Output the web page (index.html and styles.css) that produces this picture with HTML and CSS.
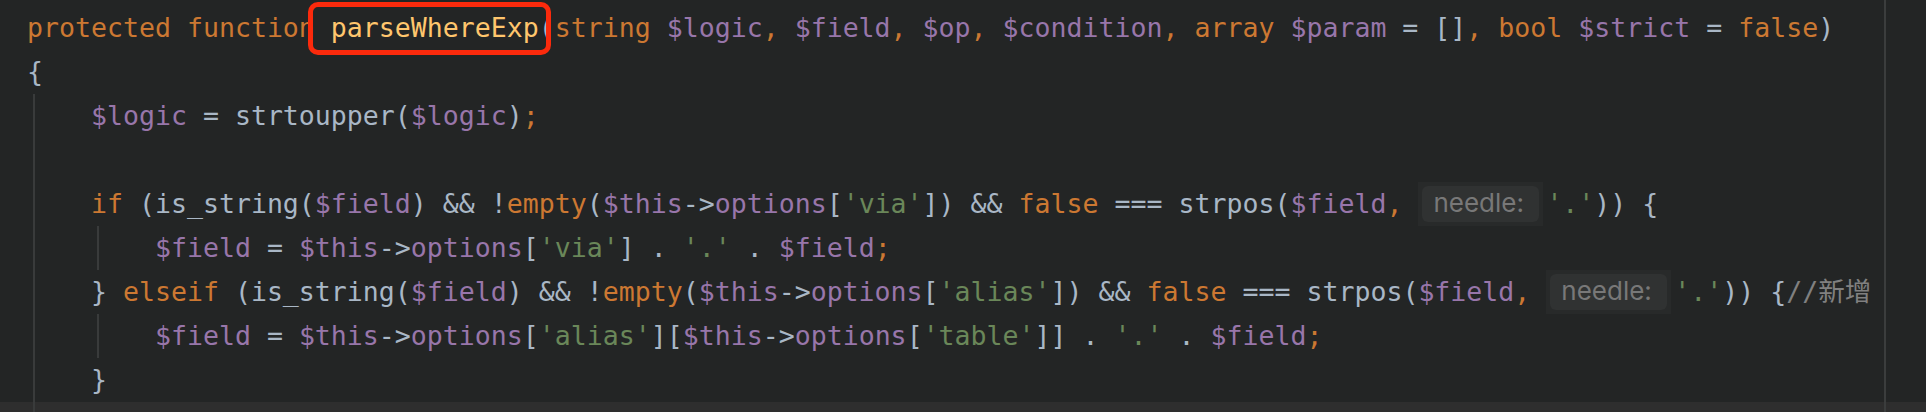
FILE: index.html
```html
<!DOCTYPE html>
<html lang="zh">
<head>
<meta charset="utf-8">
<title>parseWhereExp</title>
<link rel="stylesheet" href="styles.css">
</head>
<body>
<div class="editor">
  <div class="code">
    <div class="ln"><span class="k">protected function </span><span class="f hl">parseWhereExp</span>(<span class="k">string </span><span class="v">$logic</span><span class="k">, </span><span class="v">$field</span><span class="k">, </span><span class="v">$op</span><span class="k">, </span><span class="v">$condition</span><span class="k">, array </span><span class="v">$param</span> = []<span class="k">, bool </span><span class="v">$strict</span> = <span class="k">false</span>)</div>
    <div class="ln">{</div>
    <div class="blk">
      <div class="ln">    <span class="v">$logic</span> = strtoupper(<span class="v">$logic</span>)<span class="k">;</span></div>
      <div class="ln"></div>
      <div class="ln">    <span class="k">if</span> (is_string(<span class="v">$field</span>) &amp;&amp; !<span class="k">empty</span>(<span class="v">$this</span>-&gt;<span class="v">options</span>[<span class="s">'via'</span>]) &amp;&amp; <span class="k">false</span> === strpos(<span class="v">$field</span><span class="k">, </span><span class="hint"><span class="hint-in">needle:</span></span><span class="s">'.'</span>)) {</div>
      <div class="blk2">
        <div class="ln">        <span class="v">$field</span> = <span class="v">$this</span>-&gt;<span class="v">options</span>[<span class="s">'via'</span>] . <span class="s">'.'</span> . <span class="v">$field</span><span class="k">;</span></div>
      </div>
      <div class="ln">    } <span class="k">elseif</span> (is_string(<span class="v">$field</span>) &amp;&amp; !<span class="k">empty</span>(<span class="v">$this</span>-&gt;<span class="v">options</span>[<span class="s">'alias'</span>]) &amp;&amp; <span class="k">false</span> === strpos(<span class="v">$field</span><span class="k">, </span><span class="hint"><span class="hint-in">needle:</span></span><span class="s">'.'</span>)) {<span class="c">//新增</span></div>
      <div class="blk2">
        <div class="ln">        <span class="v">$field</span> = <span class="v">$this</span>-&gt;<span class="v">options</span>[<span class="s">'alias'</span>][<span class="v">$this</span>-&gt;<span class="v">options</span>[<span class="s">'table'</span>]] . <span class="s">'.'</span> . <span class="v">$field</span><span class="k">;</span></div>
      </div>
      <div class="ln">    }</div>
    </div>
  </div>
</div>
<div class="band"></div>
</body>
</html>
```
FILE: styles.css
```css
html, body {
  margin: 0;
  padding: 0;
  background: #232525;
}

.editor {
  height: 402px;
  box-sizing: border-box;
  padding: 6px 0 0 27px;
  overflow: hidden;
  background:
    linear-gradient(#3b3d3d, #3b3d3d) 1884px 0 / 2px 100% no-repeat,
    #232525;
}

.code {
  font-family: "DejaVu Sans Mono", "Noto Sans CJK SC", monospace;
  font-size: 26.57px;
  line-height: 44px;
  color: #a9b7c6;
}

.ln {
  height: 44px;
  white-space: pre;
}

.blk {
  background: linear-gradient(#393b3b, #393b3b) 6px 0 / 2px 100% no-repeat;
}

.blk2 {
  background: linear-gradient(#393b3b, #393b3b) 70px 0 / 2px 100% no-repeat;
}

.k { color: #cc7832; }
.v { color: #9876aa; }
.f { color: #ffc66d; }
.s { color: #6a8759; }
.c { color: #808080; font-family: "DejaVu Sans Mono", "Noto Sans CJK SC", monospace; }

.hl {
  position: relative;
}

.hl::after {
  content: "";
  position: absolute;
  left: -23px;
  right: -12px;
  top: -10px;
  bottom: -12px;
  border: 5px solid #fb2a0c;
  border-radius: 10px;
}

.hint {
  display: inline-block;
  vertical-align: top;
  box-sizing: border-box;
  width: 125px;
  height: 44px;
  margin-right: 3px;
  padding: 4px;
  background: #282a2a;
}

.hint-in {
  display: block;
  height: 36px;
  border-radius: 6px;
  background: #303232;
  font-family: Inter, "Noto Sans", sans-serif;
  font-size: 26px;
  line-height: 34px;
  color: #787878;
  padding-left: 11px;
}

.band {
  height: 10px;
  background:
    linear-gradient(#393b3b, #393b3b) 33px 0 / 2px 100% no-repeat,
    linear-gradient(#3b3d3d, #3b3d3d) 1884px 0 / 2px 100% no-repeat,
    #2e2e2e;
}
```
